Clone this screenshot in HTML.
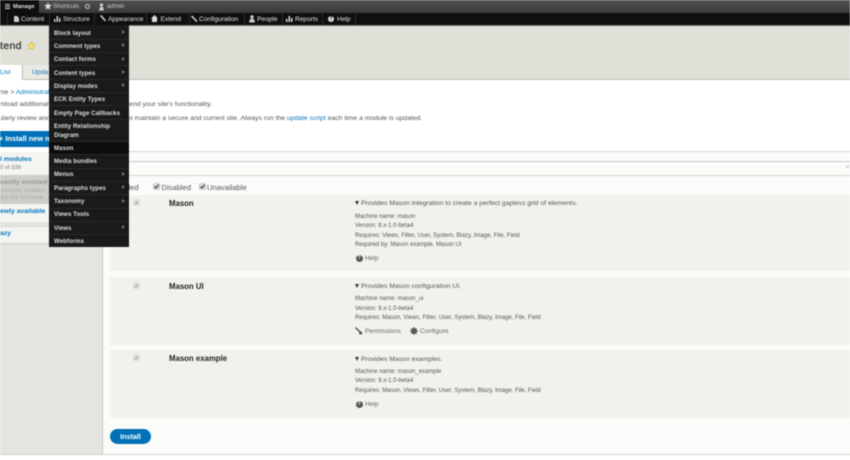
<!DOCTYPE html>
<html><head><meta charset="utf-8">
<style>
html,body{margin:0;padding:0}
body{width:850px;height:460px;overflow:hidden;position:relative;background:#fff;font-family:"Liberation Sans","DejaVu Sans",sans-serif;font-size:6.5px;color:#555}
.a{position:absolute}
.t{position:absolute;white-space:nowrap;line-height:10px}
#wrap{position:absolute;left:0;top:0;width:850px;height:460px;filter:blur(.4px);overflow:hidden}
.b{font-weight:bold}
.nav{color:#e4e4e4;font-size:6.6px;margin-top:.5px}
.sep{position:absolute;top:13px;width:1px;height:12px;background:#2c2c2c}
.m{position:absolute;left:54px;color:#ddd;font-size:6.100px;font-weight:bold;white-space:nowrap;line-height:10px;margin-top:.5px;letter-spacing:.05px}
.ml{position:absolute;left:49px;width:80px;height:1px;background:#2a2a2a}
.ar{position:absolute;left:122px;width:0;height:0;border-left:3px solid #777;border-top:2px solid transparent;border-bottom:2px solid transparent}
.row{position:absolute;left:110px;width:740px;background:#f2f2ed}
.name{position:absolute;left:169px;font-weight:bold;color:#222;font-size:7.800px;white-space:nowrap;line-height:10px;margin-top:.5px}
.cb{position:absolute;left:133px;width:7px;height:7px;background:#e0e0db;border-radius:1.500px}
.d{position:absolute;left:355px;font-size:5.970px;color:#555;white-space:nowrap;line-height:10px;margin-top:.5px}
.dt{position:absolute;left:355px;font-size:6.800px;color:#555;white-space:nowrap;line-height:10px;margin-top:.5px}
.tri{display:inline-block;width:0;height:0;border-left:2.500px solid transparent;border-right:2.500px solid transparent;border-top:4px solid #333;margin-right:2px;vertical-align:0}
.q{position:absolute;left:355.500px;width:7px;height:7px;border-radius:50%;background:#555;color:#f2f2ed;font:bold 5.500px/7px 'Liberation Sans';text-align:center}
a{color:#0678be;text-decoration:none}
</style></head><body>
<div id="wrap">
<!-- top bars -->
<div class="a" style="left:0;top:0;width:850px;height:13px;background:linear-gradient(#505050,#3a3a3a)"></div>
<div class="a" style="left:0;top:0;width:39px;height:13px;background:#0f0f0f"></div>
<div class="a" style="left:0;top:13px;width:850px;height:12px;background:#0f0f0f"></div>
<div class="a" style="left:0;top:25px;width:850px;height:1px;background:#77776f"></div>
<svg class="a" style="left:4px;top:3px" width="7" height="7" viewBox="0 0 7 7"><path d="M1 1h5v1H1zM1 3h5v1H1zM1 5h5v1H1z" fill="#ccc"/></svg>
<div class="t b" style="left:13px;top:2px;color:#ddd;font-size:5.800px">Manage</div>
<svg class="a" style="left:44px;top:2px" width="8" height="8" viewBox="0 0 24 24"><path d="M12 1l3.400 7.400 8 .9-6 5.400 1.700 8L12 18.700 4.900 22.700l1.700-8-6-5.400 8-.9z" fill="#ddd"/></svg>
<div class="t" style="left:53px;top:2px;color:#ccc;font-size:6.200px">Shortcuts</div>
<div class="a" style="left:85px;top:4px;width:3px;height:3px;border:1.300px solid #ccc;border-radius:50%"></div>
<svg class="a" style="left:98px;top:3px" width="7" height="8" viewBox="0 0 7 8"><circle cx="3.500" cy="2" r="1.600" fill="#ccc"/><path d="M1 7.500h5L5 4H2z" fill="#ccc"/></svg>
<div class="t" style="left:107px;top:2px;color:#ccc;font-size:6.200px;letter-spacing:.1px">admin</div>

<div class="sep" style="left:7px"></div><div class="sep" style="left:49px"></div><div class="sep" style="left:94px"></div><div class="sep" style="left:146px"></div><div class="sep" style="left:189px"></div><div class="sep" style="left:244px"></div><div class="sep" style="left:282px"></div><div class="sep" style="left:322px"></div><div class="sep" style="left:355px"></div>
<svg class="a" style="left:13px;top:16px" width="6" height="7" viewBox="0 0 6 7"><path d="M1 0h3l2 2v4H1z" fill="#ccc"/></svg>
<div class="t nav" style="left:21px;top:14px">Content</div>
<svg class="a" style="left:54px;top:16px" width="7" height="6" viewBox="0 0 7 6"><path d="M0 3h1.500v3H0zM2.500 0H4v6H2.500zM5 2h1.500v4H5z" fill="#ccc"/></svg>
<div class="t nav" style="left:63px;top:14px">Structure</div>
<svg class="a" style="left:99px;top:15px" width="7" height="7" viewBox="0 0 7 7"><path d="M1 1l1.500-1 4.500 5.500-1 1z" fill="#ccc"/></svg>
<div class="t nav" style="left:108px;top:14px">Appearance</div>
<svg class="a" style="left:151px;top:15px" width="8" height="7" viewBox="0 0 8 7"><path d="M0 3.500L3.500 0 7 3.500H6V7H1V3.500z" fill="#ddd"/></svg>
<div class="t nav" style="left:160.500px;top:14px">Extend</div>
<svg class="a" style="left:191px;top:15px" width="7" height="7" viewBox="0 0 7 7"><path d="M0 1.500l1.500-1L2.500 2 6.500 6l-1 1L1.500 3z" fill="#ddd"/></svg>
<div class="t nav" style="left:199px;top:14px">Configuration</div>
<svg class="a" style="left:248px;top:15px" width="8" height="8" viewBox="0 0 8 8"><circle cx="4" cy="2" r="1.700" fill="#ccc"/><path d="M1 7.500h6L6 4H2z" fill="#ccc"/></svg>
<div class="t nav" style="left:257px;top:14px">People</div>
<svg class="a" style="left:286px;top:16px" width="7" height="6" viewBox="0 0 7 6"><path d="M0 3h1.500v3H0zM2.500 0H4v6H2.500zM5 2h1.500v4H5z" fill="#ddd"/></svg>
<div class="t nav" style="left:295px;top:14px">Reports</div>
<div class="a" style="left:328px;top:16px;width:6px;height:6px;border-radius:50%;background:#ddd;color:#111;font:bold 5px/6px 'Liberation Sans';text-align:center">?</div>
<div class="t nav" style="left:337px;top:14px">Help</div>

<!-- header -->
<div class="a" style="left:0;top:26px;width:850px;height:53px;background:#e0dfd8"></div>
<div class="a" style="left:0;top:79px;width:850px;height:1px;background:#bdbdb5"></div>
<div class="t" style="left:0;top:39px;font-size:10.500px;letter-spacing:.35px;color:#333;line-height:14px;-webkit-text-stroke:.25px #333">tend</div>
<svg class="a" style="left:26.500px;top:41px" width="9" height="9" viewBox="0 0 24 24"><path d="M12 2l3 7 7.500.8-5.600 5 1.600 7.400L12 18.500l-6.500 3.700 1.600-7.400-5.600-5L9 9z" fill="#f4e48a" stroke="#d9b93c" stroke-width="2"/></svg>
<!-- tabs -->
<div class="a" style="left:0;top:65px;width:22px;height:15px;background:#fff;border-right:1px solid #bbb"></div>
<div class="t" style="left:0;top:67.500px;color:#0678be;font-size:6.800px">List</div>
<div class="a" style="left:23px;top:65px;width:26px;height:14px;background:#eaeae4"></div>
<div class="t" style="left:32px;top:67.500px;color:#0678be;font-size:6.800px">Upda</div>

<!-- content top -->
<div class="t" style="left:-1px;top:87.500px;color:#555;font-size:6.800px">me &gt; <a>Administrati</a></div>
<div class="t" style="left:-1px;top:100px;font-size:6.800px">mload additional</div>
<div class="t" style="left:124px;top:100px;font-size:6.800px">xtend your site's functionality.</div>
<div class="t" style="left:-1px;top:113.500px;font-size:6.800px">ularly review and</div>
<div class="t" style="left:129px;top:113.500px;font-size:6.800px">o maintain a secure and current site. Always run the <a>update script</a> each time a module is updated.</div>

<!-- lower region -->
<div class="a" style="left:0;top:130px;width:102px;height:21px;background:#fff"></div>
<div class="a" style="left:0;top:152px;width:102px;height:302px;background:#e5e4df"></div>
<div class="a" style="left:102px;top:152px;width:1px;height:302px;background:#c8c8c2"></div>
<div class="a" style="left:103px;top:152px;width:747px;height:302px;background:#fbfbf9"></div>
<div class="a" style="left:103px;top:151px;width:747px;height:1px;background:#d4d4d0"></div>
<div class="a" style="left:103px;top:161px;width:747px;height:1px;background:#c8c8c4"></div>
<div class="a" style="left:103px;top:175px;width:747px;height:1px;background:#d4d4d0"></div>
<div class="a" style="left:0;top:454px;width:850px;height:1px;background:#d0d0cc"></div>
<div class="a" style="left:0;top:455px;width:850px;height:5px;background:#fff"></div>
<div class="t" style="left:845px;top:163px;color:#bbb;font-size:6px">✕</div>

<!-- sidebar -->
<div class="a" style="left:0;top:131px;width:60px;height:16px;background:#0071b8"></div>
<div class="t b" style="left:-1px;top:134px;color:#fff;font-size:7.400px">+ Install new mo</div>
<div class="a" style="left:0;top:152px;width:60px;height:23px;background:#f4f4f1"></div>
<div class="t b" style="left:0;top:154.500px;color:#0678be;font-size:6.800px">l modules</div>
<div class="t" style="left:0;top:162.500px;color:#777;font-size:5.800px">0 of 338</div>
<div class="a" style="left:0;top:175px;width:50px;height:29px;background:#cdcdc9"></div>
<div class="t b" style="left:0;top:177.500px;color:#9a9a96;font-size:6.800px">cently enabled</div>
<div class="t" style="left:1px;top:185.500px;color:#aaa;font-size:5.600px">modules installed</div>
<div class="t" style="left:0;top:192.500px;color:#aaa;font-size:5.600px">thin the last week.</div>
<div class="a" style="left:0;top:204px;width:50px;height:18px;background:#f4f4f1"></div>
<div class="t b" style="left:0;top:206.500px;color:#0678be;font-size:6.800px">ewly available</div>
<div class="a" style="left:0;top:226px;width:50px;height:16px;background:#f4f4f1;border-top:1px solid #d8d8d4;border-bottom:1px solid #d0d0cc"></div>
<div class="t b" style="left:0;top:228.500px;color:#0678be;font-size:6.800px">azy</div>

<!-- filter -->
<div class="t" style="left:113px;top:163.500px;color:#888;font-size:6.200px">n</div>
<div class="t" style="left:120px;top:182.500px;color:#555;font-size:7.600px">abled</div>
<svg class="a" style="left:153px;top:183px" width="7" height="7" viewBox="0 0 7 7"><rect x=".5" y=".5" width="6" height="6" rx="1" fill="#ddd" stroke="#aaa" stroke-width=".6"/><path d="M1.700 3.500l1.300 1.500 2.500-3.200" fill="none" stroke="#222" stroke-width="1"/></svg>
<div class="t" style="left:161.500px;top:182.500px;color:#555;font-size:7.600px">Disabled</div>
<svg class="a" style="left:199px;top:183px" width="7" height="7" viewBox="0 0 7 7"><rect x=".5" y=".5" width="6" height="6" rx="1" fill="#ddd" stroke="#aaa" stroke-width=".6"/><path d="M1.700 3.500l1.300 1.500 2.500-3.200" fill="none" stroke="#222" stroke-width="1"/></svg>
<div class="t" style="left:207px;top:182.500px;color:#555;font-size:7.600px">Unavailable</div>

<!-- rows -->
<div class="row" style="top:195px;height:76px"></div>
<div class="row" style="top:277px;height:68px"></div>
<div class="row" style="top:350px;height:68px"></div>

<div class="cb" style="top:199px"><svg width="7" height="7" viewBox="0 0 7 7" style="display:block"><path d="M2 3.700l1 1.200 2-2.800" fill="none" stroke="#999" stroke-width=".9"/></svg></div>
<div class="name" style="top:198px">Mason</div>
<div class="dt" style="top:198px"><span class="tri"></span>Provides Mason integration to create a perfect gapless grid of elements.</div>
<div class="d" style="top:211px">Machine name: mason</div>
<div class="d" style="top:220.500px">Version: 8.x-1.0-beta4</div>
<div class="d" style="top:230px">Requires: Views, Filter, User, System, Blazy, Image, File, Field</div>
<div class="d" style="top:239.500px">Required by: Mason example, Mason UI</div>
<div class="q" style="top:255px">?</div>
<div class="t" style="left:365px;top:253.500px;font-size:6.600px;color:#666">Help</div>

<div class="cb" style="top:282px"><svg width="7" height="7" viewBox="0 0 7 7" style="display:block"><path d="M2 3.700l1 1.200 2-2.800" fill="none" stroke="#999" stroke-width=".9"/></svg></div>
<div class="name" style="top:281px">Mason UI</div>
<div class="dt" style="top:281px"><span class="tri"></span>Provides Mason configuration UI.</div>
<div class="d" style="top:293.500px">Machine name: mason_ui</div>
<div class="d" style="top:303px">Version: 8.x-1.0-beta4</div>
<div class="d" style="top:312.500px">Requires: Mason, Views, Filter, User, System, Blazy, Image, File, Field</div>
<svg class="a" style="left:355px;top:327px" width="8" height="8" viewBox="0 0 8 8"><path d="M0 1l1-1 4 4 2 1 0 2.500L4.500 7.500 4 5z" fill="#555"/></svg>
<div class="t" style="left:365px;top:326.500px;font-size:6.600px;color:#666">Permissions</div>
<svg class="a" style="left:410px;top:327px" width="8" height="8" viewBox="0 0 8 8"><circle cx="4" cy="4" r="2.200" fill="none" stroke="#555" stroke-width="1.600"/><path d="M4 0v8M0 4h8M1.200 1.200l5.600 5.600M6.800 1.200L1.200 6.800" stroke="#555" stroke-width=".9"/></svg>
<div class="t" style="left:420px;top:326.500px;font-size:6.600px;color:#666">Configure</div>

<div class="cb" style="top:354px"><svg width="7" height="7" viewBox="0 0 7 7" style="display:block"><path d="M2 3.700l1 1.200 2-2.800" fill="none" stroke="#999" stroke-width=".9"/></svg></div>
<div class="name" style="top:353px">Mason example</div>
<div class="dt" style="top:354px"><span class="tri"></span>Provides Mason examples.</div>
<div class="d" style="top:366px">Machine name: mason_example</div>
<div class="d" style="top:375.500px">Version: 8.x-1.0-beta4</div>
<div class="d" style="top:385px">Requires: Mason, Views, Filter, User, System, Blazy, Image, File, Field</div>
<div class="q" style="top:400.500px">?</div>
<div class="t" style="left:365px;top:399.500px;font-size:6.600px;color:#666">Help</div>

<!-- install -->
<div class="a" style="left:110px;top:429px;width:41px;height:15px;border-radius:8px;background:#0071b8;color:#fff;font-weight:bold;font-size:7.200px;line-height:15px;text-align:center">Install</div>

<!-- dropdown -->
<div class="a" style="left:49px;top:25px;width:80px;height:222px;background:#1a1a1a"></div>
<div class="a" style="left:49px;top:141px;width:80px;height:13px;background:#0d0d0d"></div>
<div class="ml" style="top:38.500px"></div><div class="ml" style="top:52px"></div><div class="ml" style="top:65px"></div><div class="ml" style="top:78.500px"></div><div class="ml" style="top:92px"></div><div class="ml" style="top:105px"></div><div class="ml" style="top:118.500px"></div><div class="ml" style="top:141px"></div><div class="ml" style="top:154px"></div><div class="ml" style="top:167.500px"></div><div class="ml" style="top:181px"></div><div class="ml" style="top:194px"></div><div class="ml" style="top:207.500px"></div><div class="ml" style="top:221px"></div><div class="ml" style="top:234px"></div>
<div class="m" style="top:28px">Block layout</div><div class="ar" style="top:30px"></div>
<div class="m" style="top:41px">Comment types</div><div class="ar" style="top:43px"></div>
<div class="m" style="top:54.500px">Contact forms</div><div class="ar" style="top:57px"></div>
<div class="m" style="top:68px">Content types</div><div class="ar" style="top:70px"></div>
<div class="m" style="top:81px">Display modes</div><div class="ar" style="top:83px"></div>
<div class="m" style="top:94.500px">ECK Entity Types</div>
<div class="m" style="top:108px">Empty Page Callbacks</div>
<div class="m" style="top:121px">Entity Relationship</div>
<div class="m" style="top:130.500px">Diagram</div>
<div class="m" style="top:143px">Mason</div>
<div class="m" style="top:156.500px">Media bundles</div>
<div class="m" style="top:169.500px">Menus</div><div class="ar" style="top:172px"></div>
<div class="m" style="top:183px">Paragraphs types</div><div class="ar" style="top:185px"></div>
<div class="m" style="top:196px">Taxonomy</div><div class="ar" style="top:199px"></div>
<div class="m" style="top:209.500px">Views Tools</div>
<div class="m" style="top:223px">Views</div><div class="ar" style="top:225px"></div>
<div class="m" style="top:236px">Webforms</div>
</div>
</body></html>
